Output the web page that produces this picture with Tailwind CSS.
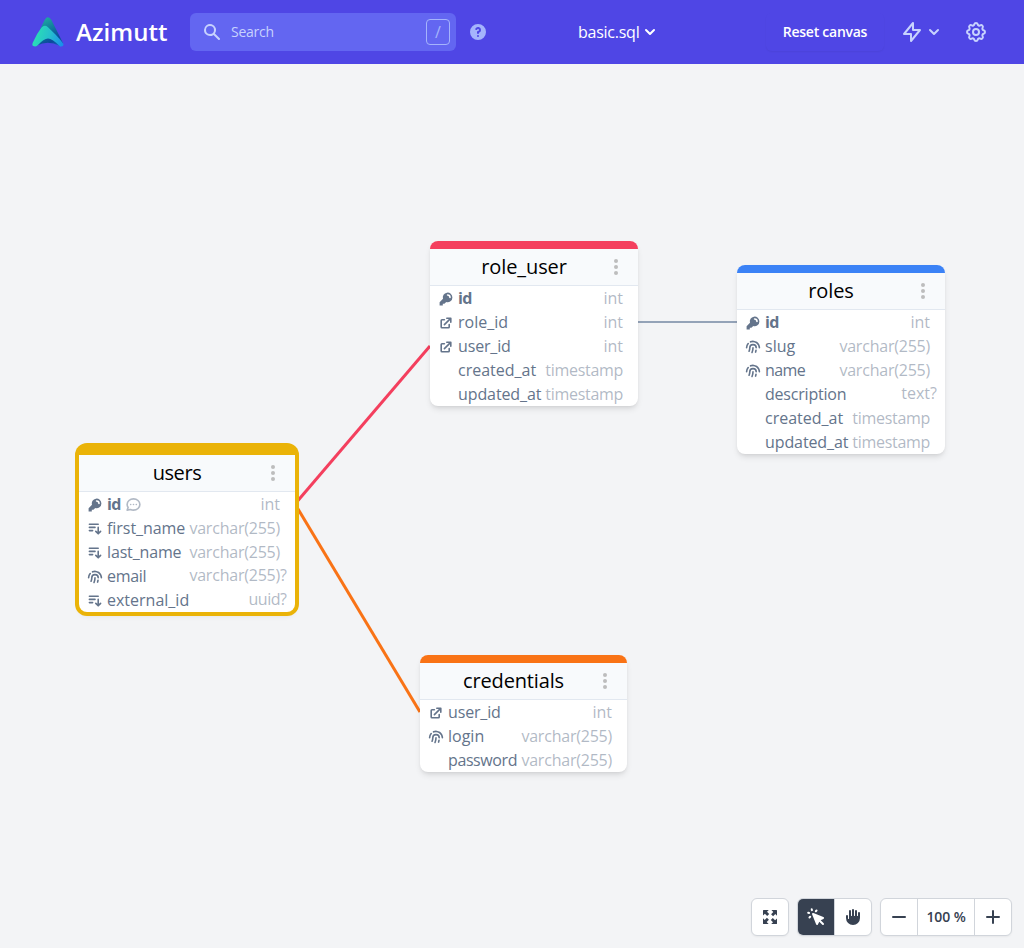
<!DOCTYPE html>
<html lang="en">
<head>
<meta charset="utf-8">
<title>Azimutt</title>
<script src="https://cdn.jsdelivr.net/npm/@tailwindcss/browser@4"></script>
</head>
<body class="h-screen w-screen overflow-hidden bg-[#f3f4f6] font-['Open_Sans','Noto_Sans',sans-serif] flex flex-col">

<svg class="hidden">
  <symbol id="key" viewBox="0 0 20 20"><path fill-rule="evenodd" d="M18 8a6 6 0 01-7.743 5.743L10 14l-1 1-1 1H6v2H2v-4l4.257-4.257A6 6 0 1118 8zm-6-4a1 1 0 100 2 2 2 0 012 2 1 1 0 102 0 4 4 0 00-4-4z"/></symbol>
  <symbol id="link" viewBox="0 0 20 20"><path d="M11 3a1 1 0 100 2h2.586l-6.293 6.293a1 1 0 101.414 1.414L15 6.414V9a1 1 0 102 0V4a1 1 0 00-1-1h-5z"/><path d="M5 5a2 2 0 00-2 2v8a2 2 0 002 2h8a2 2 0 002-2v-3a1 1 0 10-2 0v3H5V7h3a1 1 0 000-2H5z"/></symbol>
  <symbol id="finger" viewBox="0 0 20 20"><path fill-rule="evenodd" d="M6.625 2.655A9 9 0 0119 11a1 1 0 11-2 0 7 7 0 00-9.625-6.492 1 1 0 11-.75-1.853zM4.662 4.959A1 1 0 014.75 6.37 6.97 6.97 0 003 11a1 1 0 11-2 0 8.97 8.97 0 012.25-5.953 1 1 0 011.412-.088z"/><path fill-rule="evenodd" d="M5 11a5 5 0 1110 0 1 1 0 11-2 0 3 3 0 10-6 0c0 1.677-.345 3.276-.968 4.729a1 1 0 11-1.838-.789A9.964 9.964 0 005 11zm8.921 2.012a1 1 0 01.831 1.145 19.86 19.86 0 01-.545 2.436 1 1 0 11-1.92-.558c.207-.713.371-1.445.49-2.192a1 1 0 011.144-.83z"/><path fill-rule="evenodd" d="M10 10a1 1 0 011 1c0 2.236-.46 4.368-1.29 6.304a1 1 0 01-1.838-.789A13.952 13.952 0 009 11a1 1 0 011-1z"/></symbol>
  <symbol id="sort" viewBox="0 0 20 20"><path d="M3 3a1 1 0 000 2h11a1 1 0 100-2H3zM3 7a1 1 0 000 2h7a1 1 0 100-2H3zM3 11a1 1 0 100 2h4a1 1 0 100-2H3zM15 8a1 1 0 10-2 0v5.586l-1.293-1.293a1 1 0 00-1.414 1.414l3 3a1 1 0 001.414 0l3-3a1 1 0 00-1.414-1.414L15 13.586V8z"/></symbol>
  <symbol id="dots" viewBox="0 0 20 20"><path d="M10 6a2 2 0 110-4 2 2 0 010 4zM10 12a2 2 0 110-4 2 2 0 010 4zM10 18a2 2 0 110-4 2 2 0 010 4z"/></symbol>
  <symbol id="chevron" viewBox="0 0 20 20"><path fill-rule="evenodd" d="M5.293 7.293a1 1 0 011.414 0L10 10.586l3.293-3.293a1 1 0 111.414 1.414l-4 4a1 1 0 01-1.414 0l-4-4a1 1 0 010-1.414z"/></symbol>
</svg>

<nav class="h-16 shrink-0 bg-[#4f46e5] pl-8 pr-9 flex items-center text-[#c7d2fe]">
  <div class="w-[158px] flex items-center gap-3">
    <svg class="size-8 shrink-0" viewBox="0 0 32 32">
      <defs>
        <linearGradient id="back" x1="0.3" y1="0" x2="0.8" y2="1"><stop offset="0" stop-color="#1fb0a0"/><stop offset="0.5" stop-color="#0e6f9c"/><stop offset="0.8" stop-color="#0a489c"/><stop offset="1" stop-color="#1460b8"/></linearGradient>
        <linearGradient id="front" x1="0" y1="0.6" x2="1" y2="0.8"><stop offset="0" stop-color="#2ae0b4"/><stop offset="0.5" stop-color="#26c0cc"/><stop offset="1" stop-color="#1a8cec"/></linearGradient>
      </defs>
      <path fill="url(#back)" d="M12.8 3.800Q16 -1.200 19.400 4L31 27Q31 30.600 27.500 29.800Q16 24 5 29.500L2 27Q9.500 10 12.800 3.800z"/>
      <path fill="url(#front)" d="M1 26.200Q4.500 18 9.500 11.500Q12.600 8.200 16 11.200L23.500 18.500Q28 23 31.600 28.200Q31.500 31 28 30.400Q20 22.500 16 22.600Q12 22.500 5.500 29.500Q3.500 31 1.200 30Q-.4 29 1 26.200z"/>
    </svg>
    <span class="text-2xl leading-8 font-semibold text-white tracking-[0.05px]">Azimutt</span>
  </div>
  <div class="w-[266px] h-[38px] rounded-md bg-[#6366f1] pl-3 pr-1.5 flex items-center">
    <svg class="size-5" viewBox="0 0 20 20" fill="currentColor"><path fill-rule="evenodd" d="M8 4a4 4 0 100 8 4 4 0 000-8zM2 8a6 6 0 1110.89 3.476l4.817 4.817a1 1 0 01-1.414 1.414l-4.816-4.816A6 6 0 012 8z"/></svg>
    <span class="ml-[9px] flex-1 text-sm tracking-[-0.25px]">Search</span>
    <kbd class="h-[26px] w-6 rounded border border-[#a5b4fc] text-[#a5b4fc] text-base font-['Open_Sans',sans-serif] flex items-center justify-center">/</kbd>
  </div>
  <svg class="ml-3 size-5 text-[#a5b4fc]" viewBox="0 0 20 20" fill="currentColor"><path fill-rule="evenodd" d="M18 10a8 8 0 11-16 0 8 8 0 0116 0zm-8-3a1 1 0 00-.867.5 1 1 0 11-1.731-1A3 3 0 0113 8a3.001 3.001 0 01-2 2.830V11a1 1 0 11-2 0v-1a1 1 0 011-1 1 1 0 100-2zm0 8a1 1 0 100-2 1 1 0 000 2z"/></svg>
  <div class="ml-[90px] flex-1 flex items-center text-white">
    <span class="w-[62px] whitespace-nowrap text-base font-medium tracking-[-0.25px]">basic.sql</span>
    <svg class="size-5" fill="currentColor"><use href="#chevron"/></svg>
  </div>
  <div class="flex items-center">
    <div class="h-[38px] w-[118px] rounded-md shadow-[0_1px_2px_rgba(0,0,0,0.05)] flex items-center justify-center text-sm font-semibold text-white tracking-[-0.26px] whitespace-nowrap">Reset canvas</div>
    <svg class="ml-4 size-6" viewBox="0 0 24 24" fill="none" stroke="currentColor" stroke-width="2" stroke-linecap="round" stroke-linejoin="round"><path d="M13 10V3L4 14h7v7l9-11h-7z"/></svg>
    <svg class="size-5" fill="currentColor"><use href="#chevron"/></svg>
    <svg class="ml-5 size-6" viewBox="0 0 24 24" fill="none" stroke="currentColor" stroke-width="2" stroke-linecap="round" stroke-linejoin="round"><path d="M10.325 4.317c.426-1.756 2.924-1.756 3.350 0a1.724 1.724 0 002.573 1.066c1.543-.94 3.310.826 2.370 2.370a1.724 1.724 0 001.065 2.572c1.756.426 1.756 2.924 0 3.350a1.724 1.724 0 00-1.066 2.573c.94 1.543-.826 3.310-2.370 2.370a1.724 1.724 0 00-2.572 1.065c-.426 1.756-2.924 1.756-3.350 0a1.724 1.724 0 00-2.573-1.066c-1.543.94-3.310-.826-2.370-2.370a1.724 1.724 0 00-1.065-2.572c-1.756-.426-1.756-2.924 0-3.350a1.724 1.724 0 001.066-2.573c-.94-1.543.826-3.310 2.370-2.370.996.608 2.296.07 2.572-1.065z"/><path d="M15 12a3 3 0 11-6 0 3 3 0 016 0z"/></svg>
  </div>
</nav>

<main class="relative flex-1 text-base leading-6 text-[#64748b] whitespace-nowrap">
  <!-- relations between tables -->
  <svg class="absolute inset-0" width="1024" height="884" fill="none">
    <path d="M638 258H737" stroke="#94a3b8" stroke-width="2"/>
    <path d="M295 440L430 282" stroke="#f43f5e" stroke-width="3"/>
    <path d="M295 440L420 648" stroke="#f97316" stroke-width="3"/>
  </svg>

  <!-- role_user -->
  <section class="absolute left-[430px] top-[177px] w-[208px] rounded-lg bg-white shadow-md">
    <div class="h-2 rounded-t-lg bg-[#f43f5e]"></div>
    <header class="h-[37px] border-b border-[#e2e8f0] bg-[#f8fafc] px-3 flex items-center">
      <h2 class="flex-1 text-center text-xl text-black tracking-[-0.1px]">role_user</h2>
      <svg class="size-5 text-[#bdbdbd]" fill="currentColor"><use href="#dots"/></svg>
    </header>
    <div class="h-6 px-2 flex items-center"><div class="w-5 pt-0.5"><svg class="size-4" fill="currentColor"><use href="#key"/></svg></div><b class="flex-1 tracking-[-0.6px]">id</b><span class="text-[#64748b]/50">int</span><span class="w-[7px]"></span></div>
    <div class="h-6 px-2 flex items-center"><div class="w-5 pt-0.5"><svg class="size-4" fill="currentColor"><use href="#link"/></svg></div><span class="flex-1">role_id</span><span class="text-[#64748b]/50">int</span><span class="w-[7px]"></span></div>
    <div class="h-6 px-2 flex items-center"><div class="w-5 pt-0.5"><svg class="size-4" fill="currentColor"><use href="#link"/></svg></div><span class="flex-1 tracking-[-0.15px]">user_id</span><span class="text-[#64748b]/50">int</span><span class="w-[7px]"></span></div>
    <div class="h-6 px-2 flex items-center"><div class="w-5"></div><span class="flex-1">created_at</span><span class="text-[#64748b]/50 tracking-[-0.3px]">timestamp</span><span class="w-[7px]"></span></div>
    <div class="h-6 px-2 flex items-center"><div class="w-5"></div><span class="flex-1 tracking-[-0.1px]">updated_at</span><span class="text-[#64748b]/50 tracking-[-0.3px]">timestamp</span><span class="w-[7px]"></span></div>
  </section>

  <!-- roles -->
  <section class="absolute left-[737px] top-[201px] w-[208px] rounded-lg bg-white shadow-md">
    <div class="h-2 rounded-t-lg bg-[#3b82f6]"></div>
    <header class="h-[37px] border-b border-[#e2e8f0] bg-[#f8fafc] px-3 flex items-center">
      <h2 class="flex-1 text-center text-xl text-black tracking-[-0.1px]">roles</h2>
      <svg class="size-5 text-[#bdbdbd]" fill="currentColor"><use href="#dots"/></svg>
    </header>
    <div class="h-6 px-2 flex items-center"><div class="w-5 pt-0.5"><svg class="size-4" fill="currentColor"><use href="#key"/></svg></div><b class="flex-1 tracking-[-0.6px]">id</b><span class="text-[#64748b]/50">int</span><span class="w-[7px]"></span></div>
    <div class="h-6 px-2 flex items-center"><div class="w-5 pt-0.5"><svg class="size-4" fill="currentColor"><use href="#finger"/></svg></div><span class="flex-1">slug</span><span class="text-[#64748b]/50 tracking-[-0.22px]">varchar(255)</span><span class="w-[7px]"></span></div>
    <div class="h-6 px-2 flex items-center"><div class="w-5 pt-0.5"><svg class="size-4" fill="currentColor"><use href="#finger"/></svg></div><span class="flex-1 tracking-[-0.6px]">name</span><span class="text-[#64748b]/50 tracking-[-0.22px]">varchar(255)</span><span class="w-[7px]"></span></div>
    <div class="h-6 px-2 flex items-center"><div class="w-5"></div><span class="flex-1 tracking-[-0.2px]">description</span><span class="pb-0.5 text-[#64748b]/50">text</span><span class="w-[7px] pb-0.5 text-[#64748b]/50">?</span></div>
    <div class="h-6 px-2 flex items-center"><div class="w-5"></div><span class="flex-1">created_at</span><span class="text-[#64748b]/50 tracking-[-0.3px]">timestamp</span><span class="w-[7px]"></span></div>
    <div class="h-6 px-2 flex items-center"><div class="w-5"></div><span class="flex-1 tracking-[-0.1px]">updated_at</span><span class="text-[#64748b]/50 tracking-[-0.3px]">timestamp</span><span class="w-[7px]"></span></div>
  </section>

  <!-- users (selected) -->
  <section class="absolute left-[79px] top-[383px] w-[216px] rounded-lg bg-white shadow-md ring-4 ring-[#eab308]">
    <div class="h-2 bg-[#eab308]"></div>
    <header class="h-[37px] border-b border-[#e2e8f0] bg-[#f8fafc] px-3 flex items-center">
      <h2 class="flex-1 text-center text-xl text-black tracking-[-0.4px]">users</h2>
      <svg class="size-5 text-[#bdbdbd]" fill="currentColor"><use href="#dots"/></svg>
    </header>
    <div class="h-6 px-2 flex items-center"><div class="w-5 pt-0.5"><svg class="size-4" fill="currentColor"><use href="#key"/></svg></div><b class="tracking-[-0.6px]">id</b><div class="ml-1 flex-1 text-[#64748b]/50"><svg class="size-[17px]" viewBox="0 0 24 24" fill="none" stroke="currentColor" stroke-width="2.300" stroke-linecap="round" stroke-linejoin="round"><path d="M8 12h.01M12 12h.01M16 12h.01M21 12c0 4.418-4.030 8-9 8a9.863 9.863 0 01-4.255-.949L3 20l1.395-3.720C3.512 15.042 3 13.574 3 12c0-4.418 4.030-8 9-8s9 3.582 9 8z"/></svg></div><span class="text-[#64748b]/50">int</span><span class="w-[7px]"></span></div>
    <div class="h-6 px-2 flex items-center"><div class="w-5 pt-0.5"><svg class="size-4" fill="currentColor"><use href="#sort"/></svg></div><span class="flex-1 tracking-[-0.05px]">first_name</span><span class="text-[#64748b]/50 tracking-[-0.22px]">varchar(255)</span><span class="w-[7px]"></span></div>
    <div class="h-6 px-2 flex items-center"><div class="w-5 pt-0.5"><svg class="size-4" fill="currentColor"><use href="#sort"/></svg></div><span class="flex-1 tracking-[-0.15px]">last_name</span><span class="text-[#64748b]/50 tracking-[-0.22px]">varchar(255)</span><span class="w-[7px]"></span></div>
    <div class="h-6 px-2 flex items-center"><div class="w-5 pt-0.5"><svg class="size-4" fill="currentColor"><use href="#finger"/></svg></div><span class="flex-1 tracking-[-0.3px]">email</span><span class="pb-0.5 text-[#64748b]/50 tracking-[-0.22px]">varchar(255)</span><span class="w-[7px] pb-0.5 text-[#64748b]/50">?</span></div>
    <div class="h-6 px-2 flex items-center"><div class="w-5 pt-0.5"><svg class="size-4" fill="currentColor"><use href="#sort"/></svg></div><span class="flex-1">external_id</span><span class="pb-0.5 text-[#64748b]/50 tracking-[-0.5px]">uuid</span><span class="w-[7px] pb-0.5 text-[#64748b]/50">?</span></div>
  </section>

  <!-- credentials -->
  <section class="absolute left-[420px] top-[591px] w-[207px] rounded-lg bg-white shadow-md">
    <div class="h-2 rounded-t-lg bg-[#f97316]"></div>
    <header class="h-[37px] border-b border-[#e2e8f0] bg-[#f8fafc] px-3 flex items-center">
      <h2 class="flex-1 text-center text-xl text-black tracking-[-0.15px]">credentials</h2>
      <svg class="size-5 text-[#bdbdbd]" fill="currentColor"><use href="#dots"/></svg>
    </header>
    <div class="h-6 px-2 flex items-center"><div class="w-5 pt-0.5"><svg class="size-4" fill="currentColor"><use href="#link"/></svg></div><span class="flex-1 tracking-[-0.15px]">user_id</span><span class="text-[#64748b]/50">int</span><span class="w-[7px]"></span></div>
    <div class="h-6 px-2 flex items-center"><div class="w-5 pt-0.5"><svg class="size-4" fill="currentColor"><use href="#finger"/></svg></div><span class="flex-1">login</span><span class="text-[#64748b]/50 tracking-[-0.22px]">varchar(255)</span><span class="w-[7px]"></span></div>
    <div class="h-6 px-2 flex items-center"><div class="w-5"></div><span class="flex-1 tracking-[-0.4px]">password</span><span class="text-[#64748b]/50 tracking-[-0.22px]">varchar(255)</span><span class="w-[7px]"></span></div>
  </section>

  <!-- canvas controls -->
  <div class="absolute right-3 bottom-3 flex gap-2 text-[#374151]">
    <div class="size-[38px] rounded-md border border-[#d1d5db] bg-white shadow-[0_1px_2px_rgba(0,0,0,0.05)] flex items-center justify-center">
      <svg class="size-3.5" viewBox="0 0 14 14" fill="currentColor"><g id="corner"><path d="M.6 0H5.800L4 1.700 6.200 3.900 4.200 5.900 1.900 3.700 0 5.600V.6Q0 0 .6 0z"/></g><use href="#corner" transform="rotate(90 7 7)"/><use href="#corner" transform="rotate(180 7 7)"/><use href="#corner" transform="rotate(270 7 7)"/></svg>
    </div>
    <div class="h-[38px] w-[75px] rounded-md border border-[#d1d5db] bg-white shadow-[0_1px_2px_rgba(0,0,0,0.05)] flex overflow-hidden">
      <div class="w-9 bg-[#374151] text-white flex items-center justify-center"><svg class="size-5" viewBox="0 0 20 20" fill="currentColor"><path fill-rule="evenodd" d="M6.672 1.911a1 1 0 10-1.932.518l.259.966a1 1 0 001.932-.518l-.26-.966zM2.429 4.740a1 1 0 10-.517 1.932l.966.259a1 1 0 00.517-1.932l-.966-.26zm8.814-.569a1 1 0 00-1.415-1.414l-.707.707a1 1 0 101.415 1.415l.707-.708zm-7.071 7.072l.707-.707A1 1 0 003.465 9.120l-.708.707a1 1 0 001.415 1.415zm3.200-5.171a1 1 0 00-1.300 1.300l4 10a1 1 0 001.823.075l1.380-2.759 3.018 3.020a1 1 0 001.414-1.415l-3.019-3.020 2.760-1.379a1 1 0 00-.076-1.822l-10-4z"/></svg></div>
      <div class="flex-1 border-l border-[#d1d5db] flex items-center justify-center"><svg class="size-5" viewBox="0 0 20 20" fill="currentColor"><path fill-rule="evenodd" d="M9 3a1 1 0 012 0v5.500a.5.500 0 001 0V4a1 1 0 112 0v4.500a.5.500 0 001 0V6a1 1 0 112 0v5a7 7 0 11-14 0V9a1 1 0 012 0v2.500a.5.500 0 001 0V4a1 1 0 012 0v4.500a.5.500 0 001 0V3z"/></svg></div>
    </div>
    <div class="h-[38px] w-[132px] rounded-md border border-[#d1d5db] bg-white shadow-[0_1px_2px_rgba(0,0,0,0.05)] flex">
      <div class="w-9 flex items-center justify-center"><svg class="size-5" viewBox="0 0 20 20" fill="currentColor"><path d="M3 10a1 1 0 011-1h12a1 1 0 110 2H4a1 1 0 01-1-1z"/></svg></div>
      <div class="flex-1 border-x border-[#d1d5db] flex items-center justify-center text-sm font-semibold tracking-[-0.1px]">100 %</div>
      <div class="w-9 flex items-center justify-center"><svg class="size-5" viewBox="0 0 20 20" fill="currentColor"><path d="M10 3a1 1 0 011 1v5h5a1 1 0 110 2h-5v5a1 1 0 11-2 0v-5H4a1 1 0 110-2h5V4a1 1 0 011-1z"/></svg></div>
    </div>
  </div>
</main>
</body>
</html>
